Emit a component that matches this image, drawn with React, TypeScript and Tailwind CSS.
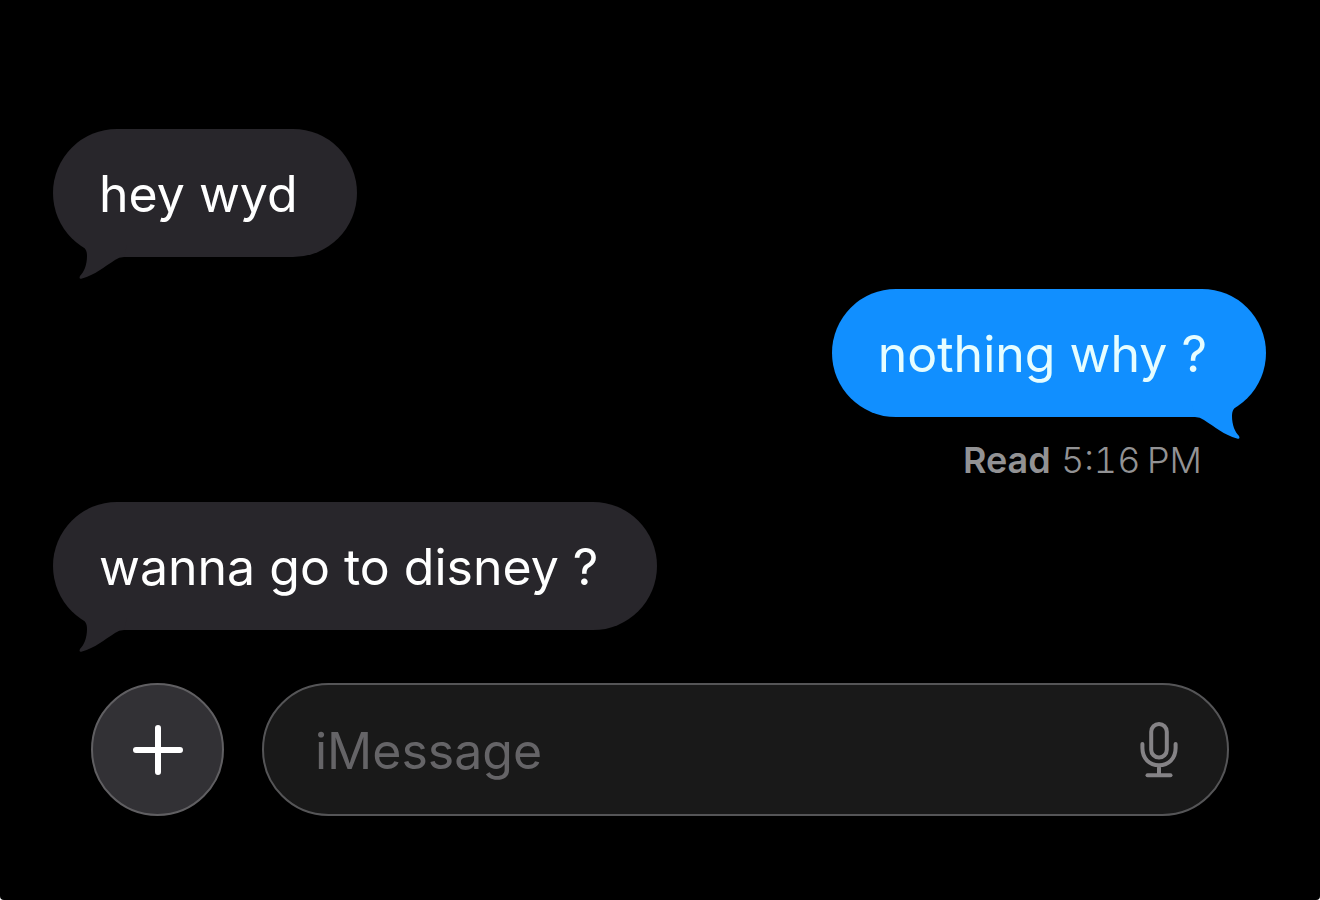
import type { ReactNode } from "react";

type Side = "received" | "sent";

function Bubble({ side, children }: { side: Side; children: ReactNode }) {
  const sent = side === "sent";
  return (
    <div
      className={
        sent
          ? "relative flex h-32 w-fit items-center self-end rounded-full bg-[#118fff] pr-[59px] pl-[46px] text-[#e6fdff]"
          : "relative flex h-32 w-fit items-center rounded-full bg-[#28262b] pr-[59px] pl-[46px] text-white"
      }
    >
      <p className="pt-0.5 text-[50px] leading-16 whitespace-nowrap">{children}</p>
      <svg
        aria-hidden="true"
        viewBox="0 0 50 40"
        className={
          sent
            ? "absolute top-28 right-6 h-10 w-[50px] -scale-x-100 text-[#118fff]"
            : "absolute top-28 left-6 h-10 w-[50px] text-[#28262b]"
        }
      >
        <path
          fill="currentColor"
          d="M4 4 C8 7 10 9 10 15 C10 24 7 31 3 35 Q1.500 38.500 5 37.500 C18 34 27 26 38 19 Q42 16 47 16 L50 4 Z"
        />
      </svg>
    </div>
  );
}

function MicIcon() {
  return (
    <svg
      aria-hidden="true"
      viewBox="0 0 38 56"
      className="h-14 w-[38px]"
      fill="none"
      stroke="currentColor"
      strokeWidth="4"
      strokeLinecap="round"
    >
      <rect x="11.200" y="2" width="15.600" height="33.500" rx="7.800" />
      <path d="M2.400 22 V26 C2.400 36.500 9.500 43.300 19 43.300 S35.600 36.500 35.600 26 V22 M19 43.300 V53" />
      <path d="M7.500 53.300 H30.500" />
    </svg>
  );
}

export default function App() {
  return (
    <div className="min-h-screen bg-white font-['Inter','Liberation_Sans',sans-serif]">
      <main className="flex min-h-screen flex-col rounded-b-sm bg-black pt-[129px]">
        <section aria-label="Conversation" className="flex flex-col pr-[54px] pl-[53px]">
          <Bubble side="received">hey wyd</Bubble>
          <div className="mt-8 flex flex-col">
            <Bubble side="sent">nothing why ?</Bubble>
            <p className="mt-[19px] mr-16 self-end text-[36px] leading-12 text-[#929294]">
              <span className="font-semibold">Read</span>{" "}
              <time dateTime="17:16" className="font-light tabular-nums">5:16&#8239;PM</time>
            </p>
          </div>
          <div className="mt-[18px]">
            <Bubble side="received">wanna go to disney ?</Bubble>
          </div>
        </section>
        <form
          className="mt-[53px] flex items-center gap-[38px] pr-[91px] pl-[91px]"
          onSubmit={(event) => event.preventDefault()}
        >
          <button
            type="button"
            aria-label="Add attachment"
            className="flex size-[133px] shrink-0 items-center justify-center rounded-full border-2 border-[#605f62] bg-[#323135] text-white"
          >
            <svg
              aria-hidden="true"
              viewBox="0 0 52 52"
              className="size-[52px]"
              stroke="currentColor"
              strokeWidth="6"
              strokeLinecap="round"
            >
              <path d="M26 4 V48 M4 26 H48" />
            </svg>
          </button>
          <div className="flex h-[133px] min-w-0 flex-1 items-center rounded-full border-2 border-[#555557] bg-[#191919] pr-[49px] pl-[51px]">
            <input
              type="text"
              aria-label="Message"
              placeholder="iMessage"
              className="h-20 min-w-0 flex-1 bg-transparent pt-0.5 text-[50px] text-white outline-none placeholder:text-[#656467]"
            />
            <button type="button" aria-label="Dictate" className="text-[#858386]">
              <MicIcon />
            </button>
          </div>
        </form>
      </main>
    </div>
  );
}
